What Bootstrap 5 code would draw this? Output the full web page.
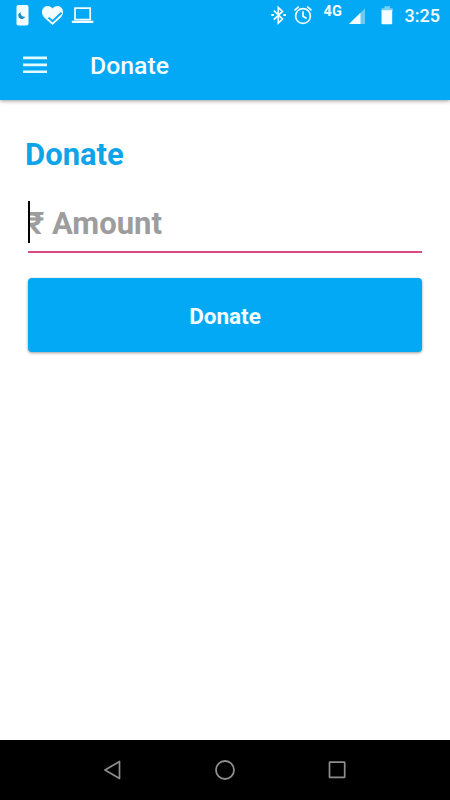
<!DOCTYPE html>
<html lang="en">
<head>
<meta charset="utf-8">
<meta name="viewport" content="width=device-width, initial-scale=1">
<title>Donate</title>
<link rel="stylesheet" href="https://cdn.jsdelivr.net/npm/bootstrap@5.3.0/dist/css/bootstrap.min.css">
<style>
  body { font-family: Roboto, "Liberation Sans", sans-serif; overflow: hidden; }
  .app-top { background: #03a9f4; box-shadow: 0 1px 4px rgba(0,0,0,.4); color: #f4fdff; }
  .status-bar { height: 31px; padding-left: 16px; padding-right: 10px; }
  .status-bar svg, .app-top button svg { display: block; flex: none; }
  .network { font-size: 14.5px; line-height: 14px; width: 18px; margin: 5px 0 0 10px; }
  .clock { font-size: 18px; line-height: 31px; font-weight: 500; }
  .toolbar { height: 69px; padding-left: 23px; }
  .toolbar-title { font-size: 24.8px; line-height: 30px; margin-left: 43px; padding-top: 1px; font-weight: 500; }
  .content { padding: 36px 28px 0; }
  .page-title { color: #0fa4e8; font-size: 31px; line-height: 38px; margin-left: -3px; }
  .amount-field { height: 52px; margin-top: 27px; }
  .amount-field .form-control { font-size: 31px; line-height: 44px; height: 52px; border-bottom: 2px solid #d84a80; color: #333; padding: 0 0 6px; }
  .amount-field .form-control::placeholder { color: #9d9d9d; opacity: 1; }
  .text-caret { width: 2px; height: 42px; background: #000; }
  .donate-btn { height: 74px; margin-top: 25px; padding: 3px 0 0; background: #03a9f4; border-radius: 4px; color: #f4fdff; font-size: 22.5px; box-shadow: 0 1px 3px rgba(0,0,0,.4); }
  .system-nav { height: 60px; background: #000; gap: 92px; }
</style>
</head>
<body class="bg-white">
<div class="d-flex flex-column vh-100">
  <header class="app-top">
    <div class="status-bar d-flex align-items-start">
      <svg width="80" height="31" viewBox="16 0 80 31" fill="#f4fdff">
        <rect x="16.5" y="5" width="12" height="20.5" rx="1.8"/>
        <path d="M20.800 12a3.600 3.600 0 1 0 4.500 4.600 3.600 3.600 0 0 1-4.500-4.600z" fill="#168fca"/>
        <path d="M52.5 25 45 18.3C42.8 16.200 42 14.300 42 12c0-3.300 2.500-5.900 5.700-5.900 2 0 3.700.9 4.800 2.400 1.100-1.500 2.800-2.400 4.800-2.400 3.200 0 5.700 2.600 5.700 5.900 0 2.300-.8 4.200-3 6.300z"/>
        <path d="m48.500 17.600 4 3.700 9-8.600" fill="none" stroke="#03a9f4" stroke-width="1.900"/>
        <path d="M75 8.200h15.200v11.500H75z" fill="none" stroke="#f4fdff" stroke-width="1.700"/>
        <path d="M71.800 20.800h21.600v1.200q0 1-1 1H72.800q-1 0-1-1z"/>
      </svg>
      <div class="d-flex align-items-start ms-auto">
        <svg width="44" height="31" viewBox="270 0 44 31" fill="none" stroke="#f4fdff" stroke-width="1.700">
          <path d="m273.800 10.500 8.700 8.500-4.200 4.100V7.500l4.200 3.900-8.700 8.300"/>
          <path d="M271.300 15h2.600M283.300 15h2.600" stroke-width="2.200"/>
          <circle cx="303" cy="16" r="7.400"/>
          <path d="M303 11.200v5l3.600 2.300M294.500 10.300l4.300-3.600M307.200 6.700l4.300 3.600"/>
        </svg>
        <span class="network fw-bold">4G</span>
        <svg width="63" height="31" viewBox="342 0 63 31">
          <path d="M349 24 365 8.500V24z" fill="#68cbf8"/>
          <path d="M349 24 360.500 12.800V24z" fill="#f4fdff"/>
          <path d="M384.500 6.300h5.500v2h2.700v3H381.500v-3h3z" fill="#78d0f9"/>
          <path d="M381.500 10.300h10.700v13.200q0 .8-.8.8h-9.100q-.8 0-.8-.8z" fill="#f4fdff"/>
        </svg>
        <span class="clock">3:25</span>
      </div>
    </div>
    <div class="toolbar d-flex align-items-center">
      <button class="btn p-0 border-0" type="button" aria-label="Menu">
        <svg width="24" height="20" viewBox="0 0 24 20"><path d="M0 1.900h24M0 8.900h24M0 15.800h24" stroke="#e6fbff" stroke-width="2.600"/></svg>
      </button>
      <span class="toolbar-title">Donate</span>
    </div>
  </header>
  <main class="content flex-grow-1">
    <h1 class="page-title fw-bold mb-0">Donate</h1>
    <div class="amount-field position-relative">
      <input class="form-control bg-transparent rounded-0 border-top-0 border-start-0 border-end-0 fw-bold shadow-none" type="text" placeholder="₹ Amount" aria-label="Amount">
      <span class="text-caret position-absolute top-0 start-0"></span>
    </div>
    <button class="donate-btn btn w-100 border-0 fw-bold" type="button">Donate</button>
  </main>
  <footer class="system-nav d-flex justify-content-center align-items-center">
    <svg width="20" height="22" viewBox="0 0 20 22" fill="none" stroke="#8e8e8e" stroke-width="1.700"><path d="M2 11 16.500 2.500v17z" stroke-linejoin="round"/></svg>
    <svg width="20" height="22" viewBox="0 0 20 22" fill="none" stroke="#8e8e8e" stroke-width="1.800"><circle cx="10" cy="11" r="9"/></svg>
    <svg width="20" height="22" viewBox="0 0 20 22" fill="none" stroke="#8e8e8e" stroke-width="1.700"><rect x="2.500" y="3.200" width="15.200" height="15.200" rx=".5"/></svg>
  </footer>
</div>
<script src="https://cdn.jsdelivr.net/npm/bootstrap@5.3.0/dist/js/bootstrap.bundle.min.js"></script>
</body>
</html>
